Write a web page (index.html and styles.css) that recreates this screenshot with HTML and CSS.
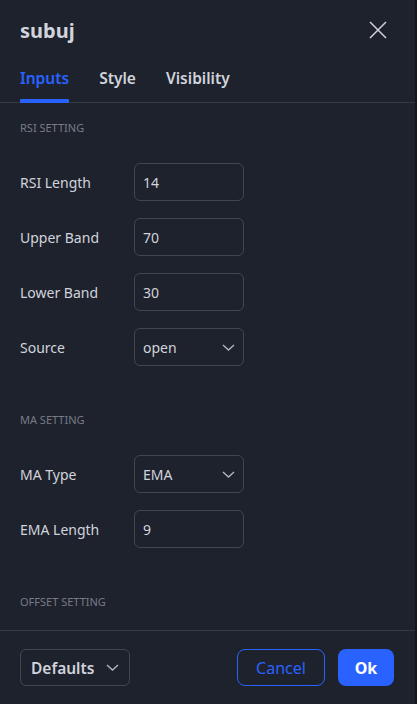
FILE: index.html
```html
<!DOCTYPE html>
<html>
<head>
<meta charset="utf-8">
<link rel="stylesheet" href="styles.css">
</head>
<body>
<div class="dialog">
  <header class="header">
    <h1 class="title">subuj</h1>
    <button class="close" aria-label="Close">
      <svg width="18" height="18" viewBox="0 0 18 18"><path d="M1 1L17 17M17 1L1 17" stroke="#d1d4dc" stroke-width="1.5" fill="none"/></svg>
    </button>
  </header>
  <nav class="tabs">
    <span class="tab active">Inputs</span>
    <span class="tab">Style</span>
    <span class="tab">Visibility</span>
  </nav>
  <main class="content">
    <section class="section">
      <div class="section-title">RSI SETTING</div>
      <div class="row"><span class="label">RSI Length</span><div class="field">14</div></div>
      <div class="row"><span class="label">Upper Band</span><div class="field">70</div></div>
      <div class="row"><span class="label">Lower Band</span><div class="field">30</div></div>
      <div class="row"><span class="label">Source</span><div class="field select">open<svg class="chev" width="13" height="7" viewBox="0 0 13 7"><path d="M1 1l5.5 5 5.5-5" stroke="#b2b5be" stroke-width="1.4" fill="none"/></svg></div></div>
    </section>
    <section class="section">
      <div class="section-title">MA SETTING</div>
      <div class="row"><span class="label">MA Type</span><div class="field select">EMA<svg class="chev" width="13" height="7" viewBox="0 0 13 7"><path d="M1 1l5.5 5 5.5-5" stroke="#b2b5be" stroke-width="1.4" fill="none"/></svg></div></div>
      <div class="row"><span class="label">EMA Length</span><div class="field">9</div></div>
    </section>
    <section class="section">
      <div class="section-title">OFFSET SETTING</div>
    </section>
  </main>
  <footer class="footer">
    <div class="defaults">Defaults<svg class="chev" width="13" height="7" viewBox="0 0 13 7"><path d="M1 1l5.5 5 5.5-5" stroke="#b2b5be" stroke-width="1.4" fill="none"/></svg></div>
    <div class="actions">
      <button class="btn cancel">Cancel</button>
      <button class="btn ok">Ok</button>
    </div>
  </footer>
</div>
</body>
</html>
```

FILE: styles.css
```css
* { box-sizing: border-box; }
html, body { margin: 0; padding: 0; }
body {
  background: #131722;
  width: 417px;
  height: 704px;
  overflow: hidden;
  font-family: "Noto Sans", "Open Sans", sans-serif;
  color: #d1d4dc;
}
.dialog {
  width: 415px;
  height: 704px;
  background: #1e222d;
  display: flex;
  flex-direction: column;
}
.header {
  height: 62px;
  padding: 0 28px 0 20px;
  display: flex;
  align-items: center;
  justify-content: space-between;
}
.title {
  margin: 0;
  font-size: 20px;
  font-weight: 700;
  color: #d1d4dc;
  line-height: 24px;
}
.close {
  background: none;
  border: 0;
  padding: 0;
  width: 18px;
  height: 18px;
  display: flex;
  margin-top: -3px;
}
.tabs {
  height: 41px;
  border-bottom: 1px solid #363a45;
  padding: 0 20px;
  display: flex;
  gap: 30px;
  align-items: flex-start;
}
.tab {
  position: relative;
  font-size: 15.5px;
  font-weight: 600;
  line-height: 20px;
  padding-top: 6px;
  height: 40px;
  color: #d1d4dc;
}
.tab.active { color: #2962ff; }
.tab.active::after {
  content: "";
  position: absolute;
  left: 0;
  right: 0;
  bottom: -1px;
  height: 4px;
  background: #2962ff;
  border-radius: 1px;
}
.content {
  flex: 1;
  padding: 17px 20px 0;
  display: flex;
  flex-direction: column;
  gap: 46px;
  overflow: hidden;
}
.section {
  display: flex;
  flex-direction: column;
  gap: 17px;
}
.section-title {
  font-size: 11px;
  line-height: 16px;
  color: #787b86;
  margin-bottom: 10px;
}
.row {
  display: grid;
  grid-template-columns: 114px 110px;
  align-items: center;
  height: 38px;
}
.label {
  font-size: 14px;
  color: #d1d4dc;
}
.field {
  height: 38px;
  border: 1px solid #434651;
  border-radius: 6px;
  padding: 0 8px;
  display: flex;
  align-items: center;
  justify-content: space-between;
  font-size: 14px;
  color: #d1d4dc;
}
.footer {
  border-top: 1px solid #363a45;
  height: 74px;
  padding: 18px 21px 0 20px;
  display: flex;
  align-items: flex-start;
  justify-content: space-between;
}
.defaults {
  width: 110px;
  height: 37px;
  border: 1px solid #434651;
  border-radius: 6px;
  padding: 0 10px 0 10px;
  display: flex;
  align-items: center;
  justify-content: space-between;
  font-size: 15.5px;
  font-weight: 600;
}
.actions {
  display: flex;
  gap: 13px;
}
.btn {
  height: 37px;
  border-radius: 8px;
  font-family: inherit;
  font-size: 16px;
  padding: 0;
}
.cancel {
  width: 88px;
  border: 1px solid #2962ff;
  background: transparent;
  color: #2962ff;
}
.ok {
  width: 56px;
  border: 0;
  background: #2962ff;
  color: #ffffff;
  font-weight: 700;
}
```
